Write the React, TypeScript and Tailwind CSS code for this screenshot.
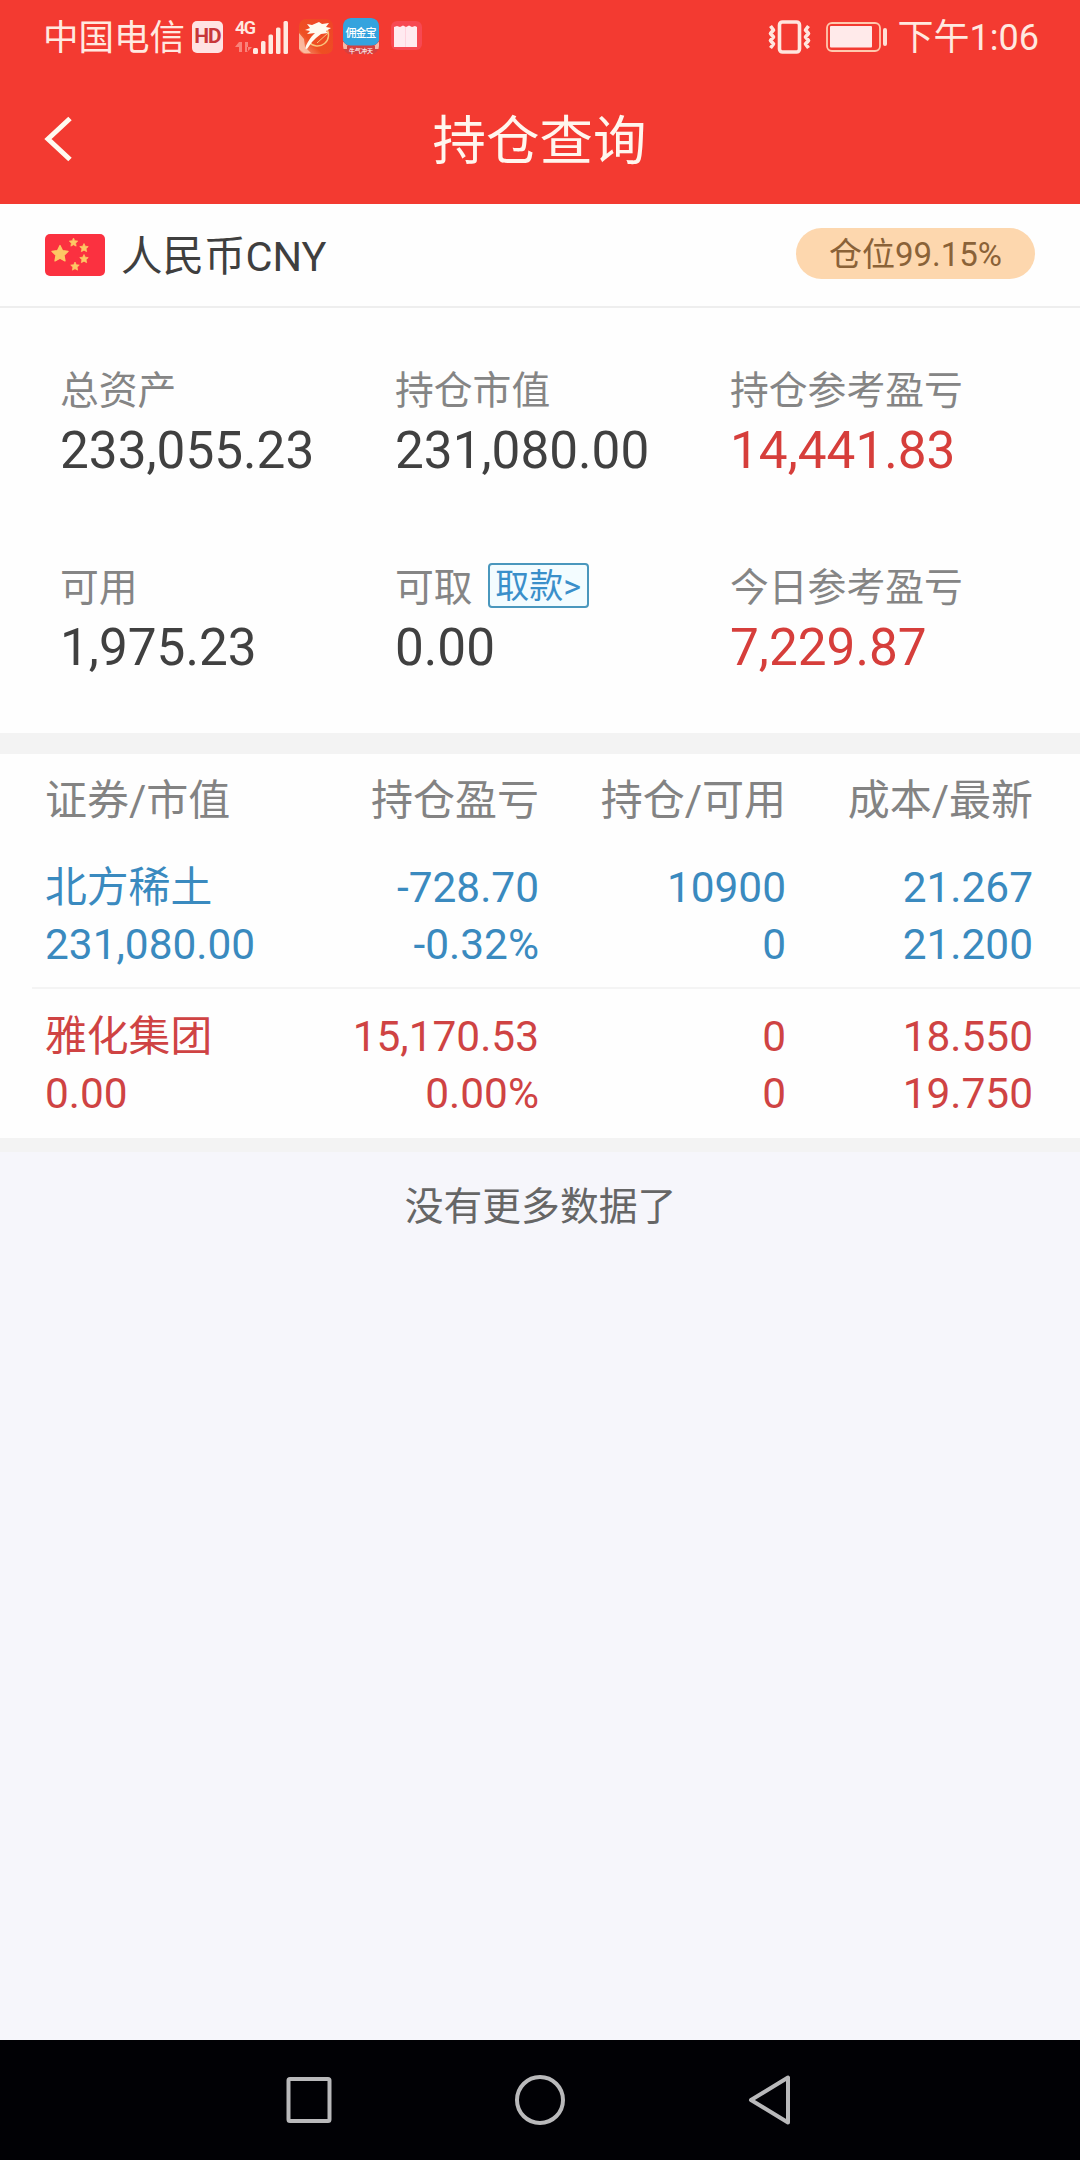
import type { ReactNode } from "react";
import { clsx } from "clsx";

type Stat = {
  label: string;
  value: string;
  highlight?: boolean;
  action?: string;
};

type Holding = {
  name: string;
  marketValue: string;
  profit: string;
  profitRate: string;
  amount: string;
  available: string;
  cost: string;
  price: string;
  trend: "up" | "down";
};

const stats: Stat[] = [
  { label: "总资产", value: "233,055.23" },
  { label: "持仓市值", value: "231,080.00" },
  { label: "持仓参考盈亏", value: "14,441.83", highlight: true },
  { label: "可用", value: "1,975.23" },
  { label: "可取", value: "0.00", action: "取款>" },
  { label: "今日参考盈亏", value: "7,229.87", highlight: true },
];

const columns = ["证券/市值", "持仓盈亏", "持仓/可用", "成本/最新"];

const holdings: Holding[] = [
  {
    name: "北方稀土",
    marketValue: "231,080.00",
    profit: "-728.70",
    profitRate: "-0.32%",
    amount: "10900",
    available: "0",
    cost: "21.267",
    price: "21.200",
    trend: "down",
  },
  {
    name: "雅化集团",
    marketValue: "0.00",
    profit: "15,170.53",
    profitRate: "0.00%",
    amount: "0",
    available: "0",
    cost: "18.550",
    price: "19.750",
    trend: "up",
  },
];

const tableGrid = "grid grid-cols-[246px_248px_247px_247px] pl-[45px]";

function SignalIcon() {
  return (
    <div className="relative ml-3 h-[36px] w-[54px]">
      <span className="absolute top-0 left-0 text-[18px] leading-[18px] font-semibold tracking-[-0.08em] text-[#ffe9e0]">
        4G
      </span>
      <svg width="54" height="36" viewBox="0 0 54 36">
        <g fill="#f9837a">
          <path d="M4 23v10h3V23h-1zM4 23l-4 5h5zM10 23h3v10h-3zM12 33l5-5h-5z" />
        </g>
        <g fill="#ffe9e0">
          <rect x="18" y="29" width="5" height="6" rx="1.5" />
          <rect x="26" y="22" width="4.5" height="13" rx="1.5" />
          <rect x="33.5" y="15.5" width="4.5" height="19.5" rx="1.5" />
          <rect x="41" y="8.5" width="4.5" height="26.5" rx="1.5" />
          <rect x="48.5" y="2" width="4.5" height="33" rx="1.5" />
        </g>
      </svg>
    </div>
  );
}

function BirdAppIcon() {
  return (
    <svg width="34" height="35" viewBox="0 0 34 35" className="ml-[10px]">
      <defs>
        <linearGradient id="bird" x1="0" y1="1" x2="1" y2="0">
          <stop offset="0" stopColor="#f8a184" />
          <stop offset="0.35" stopColor="#ee4f22" />
          <stop offset="1" stopColor="#f04428" />
        </linearGradient>
      </defs>
      <rect width="34" height="35" rx="7" fill="url(#bird)" />
      <path d="M27 9a11 11 0 1 1-17 14" fill="none" stroke="#f9c47c" strokeWidth="1.4" />
      <path
        d="M8 5l5 1 7-3 3 2 7-1-3 4 5 1-5 3 2 2-7 1-5 4-4 4-5 7H6c1-5 4-9 7-13l3-3-8 1 3-3-5-1 5-2z"
        fill="#fffaf0"
      />
      <path d="M0 14l5 6 1 8 6 6H5l-5-4z" fill="#fcc9b0" opacity="0.8" />
      <path d="M18 24l11-10" stroke="#f9c47c" strokeWidth="1" />
    </svg>
  );
}

function WalletAppIcon() {
  return (
    <svg width="38" height="37" viewBox="0 0 38 37" className="ml-[9px]">
      <defs>
        <clipPath id="wallet">
          <rect x="1" width="36" height="36" rx="8" />
        </clipPath>
      </defs>
      <g clipPath="url(#wallet)">
        <rect width="38" height="37" fill="#d6403f" />
        <path d="M0 23l7 6h24l7-6v8H0z" fill="#f7b7a8" />
        <path d="M5 28h28v8H5z" fill="#d6403f" />
        <rect x="0.5" y="0" width="37" height="27.5" rx="8" fill="#34a3de" />
      </g>
      <text
        x="3.5"
        y="18.5"
        fontSize="11"
        fontWeight="500"
        fill="#fff"
        fontFamily="'Noto Sans CJK SC', sans-serif"
        textLength="31"
      >
        佣金宝
      </text>
      <text
        x="7"
        y="34.5"
        fontSize="6"
        fontWeight="500"
        fill="#fff"
        fontFamily="'Noto Sans CJK SC', sans-serif"
      >
        牛气冲天
      </text>
    </svg>
  );
}

function BookAppIcon() {
  return (
    <svg width="34" height="34" viewBox="0 0 34 34" className="ml-[10px]">
      <rect x="1" y="1" width="31" height="29" rx="6" fill="#f74852" />
      <path d="M4 7l3-1 3 1 3-1.500 3 1.500 3-1.500 3 1.500 3-1 2 1v20H4z" fill="#ffeaf0" />
      <path d="M15.500 7v20" stroke="#ffd3de" strokeWidth="1" />
    </svg>
  );
}

function VibrateIcon() {
  return (
    <svg width="44" height="36" viewBox="0 0 44 36" fill="none" stroke="#ffe6de">
      <rect x="11.5" y="3" width="20" height="30" rx="3" strokeWidth="3.6" />
      <path
        d="M2.500 7l3 4-3 3.500 3 3.500-3 3.500 3 3.500-3 4M40.500 7l-3 4 3 3.500-3 3.500 3 3.500-3 3.500 3 4"
        strokeWidth="3.6"
        strokeLinejoin="round"
      />
    </svg>
  );
}

function BatteryIcon() {
  return (
    <svg width="62" height="30" viewBox="0 0 62 30" className="ml-[14px]">
      <rect x="1" y="1" width="53" height="28" rx="5" fill="none" stroke="#ffc9ae" strokeWidth="1.8" />
      <rect x="4" y="4" width="42" height="21.5" rx="1" fill="#ffeaea" />
      <rect x="57" y="6" width="4" height="18" rx="2" fill="#ffe0d6" />
    </svg>
  );
}

function StatusBar() {
  return (
    <div className="flex h-[73px] items-center justify-between pr-[41px] pl-[43px] text-[36px] text-[#ffe9e0]">
      <div className="flex items-center">
        <span className="pt-[3px] text-[35.5px] leading-[36px]">中国电信</span>
        <span className="ml-[7px] flex h-[32px] w-[31px] items-center justify-center rounded-[5px] bg-[#ffe3e3] text-[21px] leading-none font-bold tracking-tighter text-[#c8373a]">
          HD
        </span>
        <SignalIcon />
        <BirdAppIcon />
        <WalletAppIcon />
        <BookAppIcon />
      </div>
      <div className="flex items-center">
        <VibrateIcon />
        <BatteryIcon />
        <span className="ml-[10px] pt-[3px] leading-[36px]">下午1:06</span>
      </div>
    </div>
  );
}

function TitleBar() {
  return (
    <div className="grid h-[131px] grid-cols-[1fr_auto_1fr] items-center">
      <button className="pl-[43px]" aria-label="返回">
        <svg width="30" height="46" viewBox="0 0 30 46" fill="none" stroke="#fffaf0" strokeWidth="5">
          <path d="M27 2.500L5 23l22 20.500" />
        </svg>
      </button>
      <h1 className="pt-[7px] pr-px text-[53.5px] leading-[60px] text-[#fff6ee]">持仓查询</h1>
    </div>
  );
}

function Star({ x, y, r }: { x: number; y: number; r: number }) {
  return (
    <path
      transform={`translate(${x} ${y}) scale(${r})`}
      d="M0-1l.29.6.66.09-.48.46.12.66L0 .5l-.59.31.12-.66-.48-.46.66-.09z"
      fill="#fdc864"
      stroke="#fdc864"
      strokeWidth="0.15"
      strokeLinejoin="round"
    />
  );
}

function ChinaFlag() {
  return (
    <svg width="60" height="42" viewBox="0 0 60 42">
      <rect width="60" height="42" rx="5" fill="#fb3140" />
      <Star x={15} y={20} r={8.5} />
      <Star x={28.5} y={8.5} r={4.5} />
      <Star x={39} y={14} r={4.5} />
      <Star x={39} y={25} r={4.5} />
      <Star x={30} y={32.5} r={4.5} />
    </svg>
  );
}

function Cell({ children, first }: { children: ReactNode; first: boolean }) {
  return <div className={first ? "text-left whitespace-nowrap" : "text-right"}>{children}</div>;
}

function HoldingRow({ item }: { item: Holding }) {
  const cells = [
    [item.name, item.marketValue],
    [item.profit, item.profitRate],
    [item.amount, item.available],
    [item.cost, item.price],
  ];

  return (
    <div
      className={clsx(
        tableGrid,
        "text-[42.4px] leading-[57px]",
        item.trend === "up" ? "text-[#cf4343]" : "text-[#3a8abf]"
      )}
    >
      {cells.map(([top, bottom], i) => (
        <Cell key={i} first={i === 0}>
          <p className={clsx(i === 0 && "text-[41.8px]")}>{top}</p>
          <p>{bottom}</p>
        </Cell>
      ))}
    </div>
  );
}

function NavBar() {
  return (
    <nav className="flex h-[120px] items-center justify-between bg-[#010105] pr-[287px] pl-[285px]">
      <svg width="48" height="50" viewBox="0 0 48 50" fill="none" stroke="#b9b9bb" strokeWidth="4">
        <rect x="3.5" y="4" width="41" height="42" rx="1.5" />
      </svg>
      <svg width="52" height="52" viewBox="0 0 52 52" fill="none" stroke="#b9b9bb" strokeWidth="4">
        <circle cx="26" cy="26" r="23" />
      </svg>
      <svg width="46" height="52" viewBox="0 0 46 52" fill="none" stroke="#b9b9bb" strokeWidth="4">
        <path d="M41 3.500v45L4 26z" strokeLinejoin="round" />
      </svg>
    </nav>
  );
}

export default function App() {
  return (
    <div className="flex h-[2160px] w-[1080px] flex-col overflow-hidden bg-[#f6f6fb] font-[Roboto,'Noto_Sans_CJK_SC',sans-serif]">
      <header className="h-[204px] shrink-0 bg-[#f33a31]">
        <StatusBar />
        <TitleBar />
      </header>

      <section className="bg-[#fefefe]">
        <div className="flex h-[104px] items-center justify-between border-b-2 border-[#eeeeee] px-[45px]">
          <div className="flex items-center">
            <ChinaFlag />
            <span className="ml-[16px] pt-[4px] text-[41.5px] leading-[48px] text-[#3f3f3f]">人民币CNY</span>
          </div>
          <span className="mb-[3px] flex h-[51px] w-[239px] items-center justify-center rounded-full bg-[#fdd7ae] pt-[2px] text-[33px] text-[#8a6238]">
            仓位99.15%
          </span>
        </div>

        <div className="grid h-[425px] grid-cols-[335px_335px_1fr] grid-rows-[197px_1fr] pt-[55px] pl-[60px]">
          {stats.map((stat) => (
            <div key={stat.label}>
              <div className="flex h-[56px] items-center text-[38.8px] leading-[56px] text-[#858585]">
                <span>{stat.label}</span>
                {stat.action && (
                  <button className="mb-[6px] ml-[15px] h-[45px] w-[101px] rounded-[4px] border-2 border-[#4a97bd] bg-[#f3fcff] text-[34px] leading-[42px] text-[#3a8fca]">
                    {stat.action}
                  </button>
                )}
              </div>
              <p
                className={clsx(
                  "text-[51.3px] leading-[64px]",
                  stat.highlight ? "text-[#d63e3b]" : "text-[#404040]"
                )}
              >
                {stat.value}
              </p>
            </div>
          ))}
        </div>
      </section>

      <div className="h-[21px] bg-[#f3f3f3]" />

      <section className="h-[384px] bg-[#fefefe]">
        <div className={clsx(tableGrid, "h-[105px] pt-[17px] text-[42px] leading-[60px] text-[#838383]")}>
          {columns.map((name, i) => (
            <Cell key={name} first={i === 0}>
              {name}
            </Cell>
          ))}
        </div>
        <HoldingRow item={holdings[0]} />
        <div className="mt-[14px] mb-[19px] ml-8 h-[2px] bg-[#f4f4f4]" />
        <HoldingRow item={holdings[1]} />
      </section>

      <div className="h-[14px] bg-[#f3f3f3]" />
      <p className="pt-[30px] pl-px text-center text-[38.8px] leading-[50px] text-[#666666]">没有更多数据了</p>

      <div className="mt-auto">
        <NavBar />
      </div>
    </div>
  );
}
